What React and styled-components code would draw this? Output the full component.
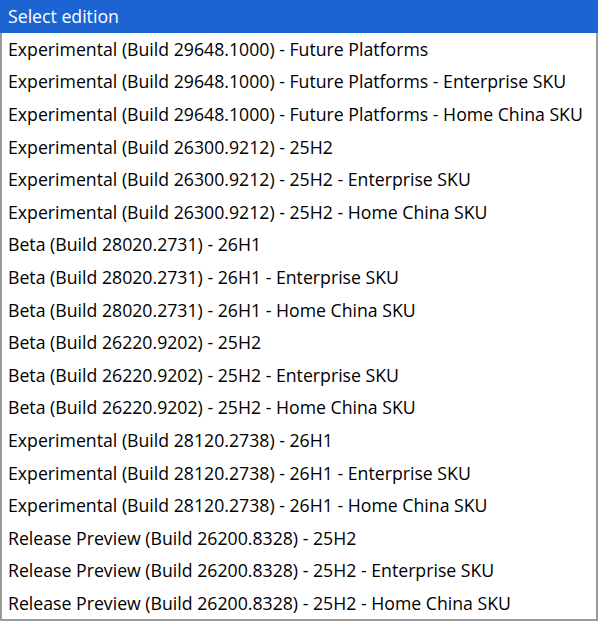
import React from "react";
import styled, { createGlobalStyle } from "styled-components";

const Global = createGlobalStyle`
  html, body { margin: 0; padding: 0; background: #ffffff; }
  body { width: 600px; height: 624px; overflow: hidden; }
`;

const List = styled.div`
  width: 598px;
  box-sizing: border-box;
  border-left: 2px solid #9a9a9a;
  border-right: 2px solid #9a9a9a;
  border-bottom: 2px solid #9a9a9a;
  background: #ffffff;
  display: flex;
  flex-direction: column;
`;

const Option = styled.div`
  height: 32.6px;
  display: flex;
  align-items: center;
  font-family: "Open Sans", "Noto Sans", sans-serif;
  font-size: 17.7px;
  color: ${(p) => (p.$selected ? "#ffffff" : "#000000")};
  background: ${(p) => (p.$selected ? "#1c64d1" : "transparent")};
  white-space: nowrap;
  margin: ${(p) => (p.$selected ? "0 -2px" : "0")};
  padding-left: ${(p) => (p.$selected ? "8px" : "6px")};
`;

const items = [
  "Experimental (Build 29648.1000) - Future Platforms",
  "Experimental (Build 29648.1000) - Future Platforms - Enterprise SKU",
  "Experimental (Build 29648.1000) - Future Platforms - Home China SKU",
  "Experimental (Build 26300.9212) - 25H2",
  "Experimental (Build 26300.9212) - 25H2 - Enterprise SKU",
  "Experimental (Build 26300.9212) - 25H2 - Home China SKU",
  "Beta (Build 28020.2731) - 26H1",
  "Beta (Build 28020.2731) - 26H1 - Enterprise SKU",
  "Beta (Build 28020.2731) - 26H1 - Home China SKU",
  "Beta (Build 26220.9202) - 25H2",
  "Beta (Build 26220.9202) - 25H2 - Enterprise SKU",
  "Beta (Build 26220.9202) - 25H2 - Home China SKU",
  "Experimental (Build 28120.2738) - 26H1",
  "Experimental (Build 28120.2738) - 26H1 - Enterprise SKU",
  "Experimental (Build 28120.2738) - 26H1 - Home China SKU",
  "Release Preview (Build 26200.8328) - 25H2",
  "Release Preview (Build 26200.8328) - 25H2 - Enterprise SKU",
  "Release Preview (Build 26200.8328) - 25H2 - Home China SKU",
];

export default function App() {
  return (
    <>
      <Global />
      <List>
        <Option $selected>Select edition</Option>
        {items.map((t, i) => (
          <Option key={i}>{t}</Option>
        ))}
      </List>
    </>
  );
}
